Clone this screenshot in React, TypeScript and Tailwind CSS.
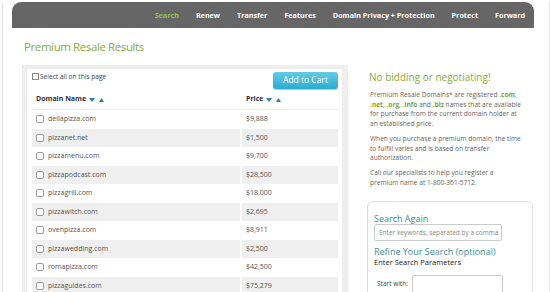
const navItems = [
  "Search",
  "Renew",
  "Transfer",
  "Features",
  "Domain Privacy + Protection",
  "Protect",
  "Forward",
];

const rows = [
  ["dellapizza.com", "$9,888"],
  ["pizzanet.net", "$1,500"],
  ["pizzamenu.com", "$9,700"],
  ["pizzapodcast.com", "$28,500"],
  ["pizzagrill.com", "$18,000"],
  ["pizzawitch.com", "$2,695"],
  ["ovenpizza.com", "$8,911"],
  ["pizzawedding.com", "$2,500"],
  ["romapizza.com", "$42,500"],
  ["pizzaguides.com", "$75,279"],
];

function SortArrows() {
  return (
    <span className="ml-[3px] inline-flex items-center gap-[4px] text-[#2a7fb8]">
      <svg width="6" height="4" viewBox="0 0 6 4">
        <path d="M0 0h6L3 4z" fill="currentColor" />
      </svg>
      <svg width="5" height="4" viewBox="0 0 5 4">
        <path d="M0 4h5L2.5 0z" fill="currentColor" />
      </svg>
    </span>
  );
}

function Box() {
  return (
    <span className="inline-block shrink-0 w-[8px] h-[8px] border border-[#9a9a9a] rounded-[2px] bg-white" />
  );
}

export default function App() {
  return (
    <div
      className="w-[550px] h-[292px] overflow-hidden bg-white"
      style={{ fontFamily: '"Open Sans", "Liberation Sans", sans-serif' }}
    >
      <div className="ml-[2px] w-[548px] h-full border-x border-[#e3e3e3]">
        {/* top nav */}
        <div className="ml-[9px] mt-[2px] w-[522px] h-[26px] bg-[#666666] rounded-t-[9px] flex items-center justify-end pr-[9px] gap-[17px] text-[7.2px] font-bold text-white">
          {navItems.map((item, i) => (
            <span key={item} className={i === 0 ? "text-[#8cc63f]" : ""}>
              {item}
            </span>
          ))}
        </div>

        <div className="flex pl-[19px]">
          {/* left */}
          <div className="w-[326px]">
            <h1 className="mt-[12px] ml-[2px] text-[11.5px] leading-[14px] tracking-[-0.4px] text-[#8aab3c]">
              Premium Resale Results
            </h1>
            <div className="mt-[11px] bg-[#eeeeee] pl-[5px] pr-[6px] pt-[4px]">
              <div className="bg-white pl-[5px] pr-[4px] pt-[3px]">
                <div className="flex justify-between h-[18px]">
                  <label className="flex items-center gap-[1px] text-[6.6px] text-[#444] h-[7px] mt-[1px]">
                    <span className="inline-block w-[7px] h-[7px] border border-[#888] bg-white" />
                    Select all on this page
                  </label>
                  <button className="w-[65px] h-[17px] rounded-[3px] bg-gradient-to-b from-[#62cbe4] to-[#27acd0] text-white text-[8.5px] shadow-[0_1px_1px_rgba(0,0,0,0.25)]">
                    Add to Cart
                  </button>
                </div>
                <div className="flex h-[20px] items-center border-b border-[#eeeeee] text-[7px] font-bold text-[#333]">
                  <div className="w-[210px] pl-[4px] flex items-center">
                    Domain Name <SortArrows />
                  </div>
                  <div className="pl-[4px] flex items-center">
                    Price <SortArrows />
                  </div>
                </div>
                {rows.map(([name, price], i) => (
                  <div
                    key={name}
                    className={
                      "flex h-[18.5px] items-center text-[7px] text-[#555] " +
                      (i % 2 === 1 ? "bg-[#efefef]" : "")
                    }
                  >
                    <div className="w-[208px] h-full flex items-center pl-[4px] gap-[4px]">
                      <Box />
                      {name}
                    </div>
                    <div className="w-[2px] h-full bg-white" />
                    <div className="flex-1 h-full flex items-center pl-[4px]">{price}</div>
                  </div>
                ))}
              </div>
            </div>
          </div>

          {/* right */}
          <div className="ml-[19px] w-[166px]">
            <h2 className="mt-[42px] ml-[2px] text-[10px] leading-[14px] text-[#8aab3c]">
              No bidding or negotiating!
            </h2>
            <div className="ml-[3px] w-[152px] text-[6.6px] leading-[9.7px] text-[#666]">
              <p className="mt-[6px]">
                Premium Resale Domains* are registered{" "}
                <b className="text-[#7ea52c]">.com</b>,{" "}
                <b className="text-[#7ea52c]">.net</b>,{" "}
                <b className="text-[#7ea52c]">.org</b>,{" "}
                <b className="text-[#7ea52c]">.info</b> and{" "}
                <b className="text-[#7ea52c]">.biz</b> names that are available for purchase
                from the current domain holder at an established price.
              </p>
              <p className="mt-[5px]">
                When you purchase a premium domain, the time to fulfill varies and is based on
                transfer authorization.
              </p>
              <p className="mt-[5px]">
                Call our specialists to help you register a premium name at 1-800-361-5712.
              </p>
            </div>
            <div className="mt-[14px] h-[120px] border border-[#dddddd] rounded-t-[6px] pl-[6px] pt-[11px]">
              <div className="text-[9px] leading-[11px] text-[#3a8e9c]">Search Again</div>
              <div className="w-[128px] h-[17px] border border-[#cccccc] rounded-[2px] flex items-center px-[4px] text-[6.5px] text-[#888] whitespace-nowrap overflow-hidden">
                Enter keywords, separated by a comma
              </div>
              <div className="mt-[5px] text-[9px] leading-[12px] text-[#3a8e9c]">
                Refine Your Search (optional)
              </div>
              <div className="text-[7.5px] leading-[9px] text-[#222]">Enter Search Parameters</div>
              <div className="mt-[8px] flex items-center">
                <span className="ml-[3px] w-[35px] text-[6.5px] text-[#444]">Start with:</span>
                <div className="w-[91px] h-[18px] border border-[#cccccc] rounded-[2px]" />
              </div>
            </div>
          </div>
        </div>
      </div>
    </div>
  );
}
